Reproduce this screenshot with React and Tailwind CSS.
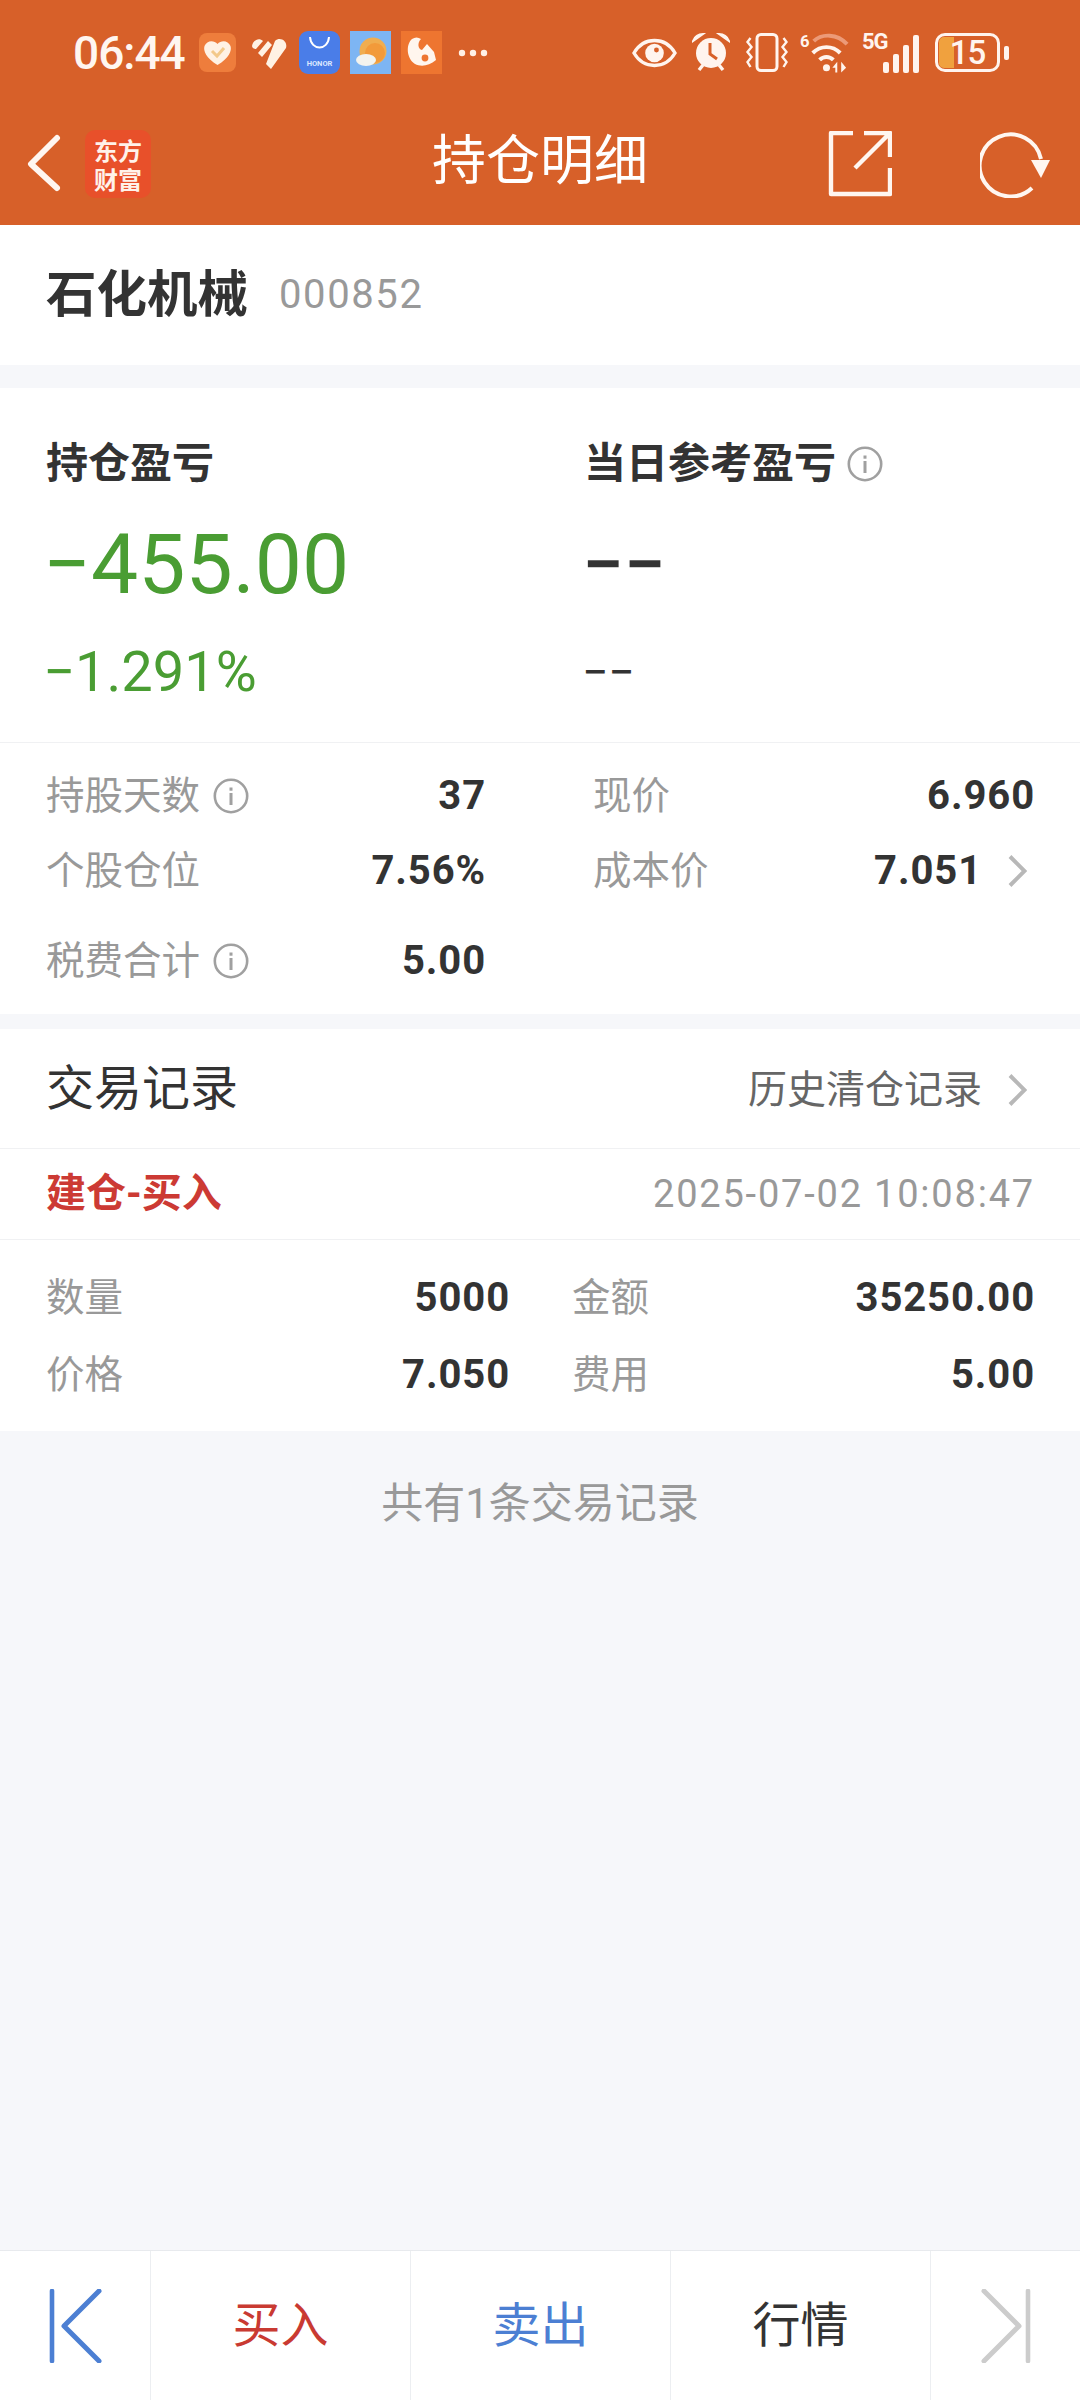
const sans = { fontFamily: '"Roboto","Noto Sans CJK SC",sans-serif' };

function Info({ className = "" }) {
  return (
    <svg width="36" height="36" viewBox="0 0 36 36" className={className}>
      <circle cx="18" cy="18" r="16.2" fill="none" stroke="#a0a0a0" strokeWidth="2.6" />
      <rect x="16.5" y="15" width="3" height="12" fill="#a0a0a0" />
      <rect x="16.5" y="9.5" width="3" height="3.2" fill="#a0a0a0" />
    </svg>
  );
}

function Chevron({ className = "" }) {
  return (
    <svg width="19" height="32" viewBox="0 0 19 32" className={"ml-[26px] " + className}>
      <path d="M2 1.5 L16.5 16 L2 30.5" fill="none" stroke="#b8b8b8" strokeWidth="4" />
    </svg>
  );
}

function StatusLeft() {
  return (
    <div className="flex items-center">
      <span className="text-[46px] font-medium text-[#fff6f0] tracking-[-1px] w-[111px] leading-none">06:44</span>
      <svg width="37" height="39" viewBox="0 0 37 39" className="ml-[15px]">
        <rect width="37" height="39" rx="8" fill="#ee7d3c" />
        <path d="M18.5 32 C7 25 4 18 5.5 13 C8 7 15 7 18.5 11 C22 7 29 7 31.5 13 C33 18 30 25 18.5 32Z" fill="#fff2e4" />
        <path d="M13 18 L18 23 L25 15" fill="none" stroke="#f3c98a" strokeWidth="3" />
      </svg>
      <svg width="36" height="32" viewBox="0 0 36 32" className="ml-[15px]">
        <path d="M1 9 C2 3 8 0 12 4 L5 12 C3 12 1 11 1 9Z M7 16 L17 4 L21 8 L11 20Z M15 27 L24 4 C29 -1 37 4 35 11 L20 32Z" fill="#fff2e4" />
      </svg>
      <svg width="41" height="43" viewBox="0 0 41 43" className="ml-[12px]">
        <rect width="41" height="43" rx="9" fill="#4a7de8" />
        <path d="M11 6 C12 20 29 20 30 6" fill="none" stroke="#fff" strokeWidth="2" />
        <text x="20.5" y="35" textAnchor="middle" fontSize="7.5" fontWeight="700" fill="#dce8ff" fontFamily="Roboto">HONOR</text>
      </svg>
      <svg width="41" height="43" viewBox="0 0 41 43" className="ml-[10px]">
        <rect width="41" height="43" fill="#7db5f3" />
        <circle cx="23" cy="20" r="13.5" fill="#f0ad4f" />
        <circle cx="25" cy="22" r="10" fill="#f29a3a" />
        <ellipse cx="16" cy="29" rx="10" ry="6" fill="#f3f3ee" />
      </svg>
      <svg width="41" height="43" viewBox="0 0 41 43" className="ml-[10px]">
        <rect width="41" height="43" fill="#ee7530" />
        <path d="M11 8 C5 13 5 27 14 33 C20 36 28 35 35 29 L33 21 L26 13 L21 19 C17 18 16 12 20 8 C17 6 14 6 11 8Z" fill="#fff6ee" />
        <circle cx="24" cy="27" r="3.4" fill="#ee7530" />
      </svg>
      <svg width="30" height="8" viewBox="0 0 30 8" className="ml-[16px]">
        <circle cx="4" cy="4" r="3.2" fill="#fff0e6" />
        <circle cx="15" cy="4" r="3.2" fill="#fff0e6" />
        <circle cx="26" cy="4" r="3.2" fill="#fff0e6" />
      </svg>
    </div>
  );
}

function StatusRight() {
  const c = "#fff4ee";
  return (
    <div className="flex items-center">
      <svg width="45" height="32" viewBox="0 0 46 32">
        <path d="M2 16 C12 -1 34 -1 44 16 C34 33 12 33 2 16Z" fill="none" stroke={c} strokeWidth="3.4" />
        <circle cx="23" cy="16" r="9.5" fill={c} />
        <circle cx="25" cy="13" r="2.5" fill="#d76029" />
      </svg>
      <svg width="38" height="39" viewBox="0 0 38 39" className="ml-[15px]">
        <circle cx="19" cy="20" r="15" fill={c} />
        <path d="M18 10 V21 L25 26" fill="none" stroke="#d76029" strokeWidth="3" />
        <path d="M1 8 C3 3 7 1 11 1 Z M37 8 C35 3 31 1 27 1Z" fill={c} stroke={c} strokeWidth="2" />
        <path d="M7 37 L11 32 M31 37 L27 32" stroke={c} strokeWidth="3.4" />
      </svg>
      <svg width="43" height="39" viewBox="0 0 42 39" className="ml-[15px]">
        <rect x="11.5" y="1.5" width="20" height="36" rx="4" fill="none" stroke={c} strokeWidth="3" />
        <path d="M5 5 L2 9 L6 14 L2 19 L6 24 L2 29 L5 34 M38 5 L41 9 L37 14 L41 19 L37 24 L41 29 L38 34" fill="none" stroke={c} strokeWidth="2.4" />
      </svg>
      <svg width="51" height="42" viewBox="0 0 52 42" className="ml-[12px]">
        <text x="0" y="15" fontSize="17" fontWeight="700" fill={c} fontFamily="Roboto">6</text>
        <path d="M14 9 C22 1 38 1 48 12" fill="none" stroke="#ec9a78" strokeWidth="4" />
        <path d="M13 21 C21 13 33 13 41 21" fill="none" stroke={c} strokeWidth="4" />
        <path d="M20 28 C24 24 30 24 34 28" fill="none" stroke={c} strokeWidth="4" />
        <circle cx="27" cy="36" r="3.6" fill={c} />
        <path d="M33 36 L38 30 V41 H36 V36 Z M42 30 L47 36 L42 41 Z" fill={c} />
      </svg>
      <div className="ml-[11px] relative w-[57px] h-[40px]">
        <span className="absolute left-0 top-[-2px] text-[22px] font-bold leading-[22px] tracking-[-1px] text-[#fff4ee]">5G</span>
        <div className="absolute right-0 bottom-0 flex items-end gap-[4px]">
          <span className="w-[6px] h-[11px] bg-[#fff4ee] rounded-[2px]" />
          <span className="w-[6px] h-[19px] bg-[#fff4ee] rounded-[2px]" />
          <span className="w-[6px] h-[28px] bg-[#fff4ee] rounded-[2px]" />
          <span className="w-[6px] h-[38px] bg-[#fff4ee] rounded-[2px]" />
        </div>
      </div>
      <div className="ml-[16px] relative w-[65px] h-[39px] rounded-[10px] border-[3px] border-[#fff4ee] overflow-hidden flex items-center justify-center">
        <span className="absolute left-[1px] top-[1px] bottom-[1px] w-[15px] rounded-l-[5px] bg-[#f0a13e]" />
        <span className="relative text-[33px] leading-none font-medium tracking-[-1px] text-[#fff4ee]">15</span>
      </div>
      <span className="ml-[4px] w-[5px] h-[14px] rounded-[2px] bg-[#fff4ee]" />
    </div>
  );
}

function Metric({ label, info, value, chevron, className = "" }) {
  return (
    <div className={"flex items-center h-[40px] " + className}>
      <span className="text-[38.5px] text-[#999999] leading-none">{label}</span>
      {info && <Info className="ml-[13px]" />}
      <span className="ml-auto text-[40px] font-bold text-[#333333] leading-none tracking-[0.9px]">{value}</span>
      {chevron && <Chevron className="mr-[8px]" />}
    </div>
  );
}

function Tab({ label, color }) {
  return (
    <div className="w-[260px] h-full flex items-center justify-center border-l border-[#eceef1] text-[48px]" style={{ color }}>
      {label}
    </div>
  );
}

export default function App() {
  return (
    <div className="w-[1080px] h-[2400px] bg-[#f6f7fa] flex flex-col overflow-hidden" style={sans}>
      <header className="h-[225px] bg-[#d76029] shrink-0 flex flex-col">
        <div className="h-[102px] pl-[73px] pr-[71px] flex items-center justify-between pt-[3px]">
          <StatusLeft />
          <StatusRight />
        </div>
        <div className="flex-1 relative flex items-center">
          <svg width="36" height="60" viewBox="0 0 36 60" className="ml-[26px]">
            <path d="M31 4 L5 30 L31 54" fill="none" stroke="#fff6f0" strokeWidth="6" strokeLinecap="round" strokeLinejoin="round" />
          </svg>
          <div className="ml-[23px] w-[66px] h-[68px] bg-[#e8502a] rounded-[10px] flex items-center justify-center">
            <span className="w-[48px] text-center text-[#fff2ea] text-[24px] leading-[29px] font-bold" style={{ fontFamily: '"Noto Sans CJK SC",serif' }}>东方财富</span>
          </div>
          <span className="absolute left-0 right-0 text-center text-[54px] text-white leading-none pointer-events-none top-[33px]">持仓明细</span>
          <svg width="64" height="66" viewBox="0 0 64 66" className="ml-auto">
            <path d="M25 2 H3 V63 H62 V37 M62 26 V2 H36 M61 3 L27 37" fill="none" stroke="#fff6f0" strokeWidth="4.4" strokeLinejoin="round" />
          </svg>
          <svg width="72" height="68" viewBox="0 0 72 68" className="ml-[88px] mr-[28px]">
            <path d="M52 58 A31 31 0 1 1 61 29" fill="none" stroke="#fff6f0" strokeWidth="4" />
            <path d="M51 30 L70 30 L61 48 Z" fill="#fff6f0" />
          </svg>
        </div>
      </header>

      <section className="h-[140px] bg-white shrink-0 flex items-center pl-[46px]">
        <span className="text-[50.5px] font-bold text-[#333333] leading-none">石化机械</span>
        <span className="ml-[31px] text-[40px] text-[#999999] leading-none tracking-[1.6px]">000852</span>
      </section>

      <section className="mt-[23px] bg-white shrink-0 h-[626px] flex flex-col">
        <div className="h-[355px] shrink-0 border-b border-[#f0f1f3] grid grid-cols-[538px_1fr] pl-[46px] pt-[55px]">
          <div className="flex flex-col">
            <span className="text-[42px] font-bold text-[#333333] leading-none">持仓盈亏</span>
            <span className="mt-[38px] ml-[-3px] text-[84px] text-[#4a9d33] leading-none">−455.00</span>
            <span className="mt-[37px] ml-[-3px] text-[56px] text-[#4a9d33] leading-none">−1.291%</span>
          </div>
          <div className="flex flex-col">
            <div className="flex items-center h-[42px]">
              <span className="text-[42px] font-bold text-[#333333] leading-none">当日参考盈亏</span>
              <Info className="ml-[11px]" />
            </div>
            <span className="mt-[38px] ml-[-2px] text-[74px] font-medium text-[#333333] leading-[84px]">−−</span>
            <span className="mt-[37px] ml-[-2px] text-[46px] text-[#333333] leading-[56px]">−−</span>
          </div>
        </div>
        <div className="grid grid-cols-[440px_442px] gap-x-[107px] pl-[46px] pt-[33px]">
          <div className="flex flex-col">
            <Metric label="持股天数" info value="37" />
            <Metric label="个股仓位" value="7.56%" className="mt-[35px]" />
            <Metric label="税费合计" info value="5.00" className="mt-[50px]" />
          </div>
          <div className="flex flex-col">
            <Metric label="现价" value="6.960" />
            <Metric label="成本价" value="7.051" chevron className="mt-[35px]" />
          </div>
        </div>
      </section>

      <section className="mt-[15px] bg-white shrink-0 h-[402px] flex flex-col">
        <div className="h-[120px] shrink-0 border-b border-[#f0f1f3] flex items-center pl-[46px] pr-[53px]">
          <span className="text-[48px] text-[#333333] leading-none">交易记录</span>
          <span className="ml-auto mt-[3px] text-[39px] text-[#666666] leading-none">历史清仓记录</span>
          <Chevron className="mt-[3px]" />
        </div>
        <div className="h-[91px] shrink-0 border-b border-[#f0f1f3] flex items-center pl-[46px] pr-[45px]">
          <span className="text-[40px] font-bold text-[#cc3a34] leading-none">建仓-买入</span>
          <span className="ml-auto text-[38px] text-[#999999] leading-none tracking-[1.8px]">2025-07-02 10:08:47</span>
        </div>
        <div className="grid grid-cols-[464px_1fr] gap-x-[62px] pl-[46px] pr-[45px] pt-[38px] gap-y-[37px]">
          <Metric label="数量" value="5000" />
          <Metric label="金额" value="35250.00" />
          <Metric label="价格" value="7.050" />
          <Metric label="费用" value="5.00" />
        </div>
      </section>

      <p className="mt-[52px] text-center text-[42px] text-[#999999] leading-none">共有1条交易记录</p>

      <nav className="mt-auto h-[150px] bg-white border-t border-[#e8eaee] shrink-0 flex items-center">
        <div className="w-[150px] h-full flex items-center pl-[49px]">
          <svg width="54" height="74" viewBox="0 0 54 74">
            <path d="M3 2 V72" fill="none" stroke="#4c7fd3" strokeWidth="4.6" strokeLinecap="round" />
            <path d="M50 2 L15 37 L50 72" fill="none" stroke="#4c7fd3" strokeWidth="5" strokeLinecap="round" strokeLinejoin="round" />
          </svg>
        </div>
        <Tab label="买入" color="#c93a32" />
        <Tab label="卖出" color="#4c7fd3" />
        <Tab label="行情" color="#333333" />
        <div className="flex-1 h-full border-l border-[#eceef1] flex items-center pl-[50px]">
          <svg width="54" height="74" viewBox="0 0 54 74">
            <path d="M3 2 L38 37 L3 72" fill="none" stroke="#cccccc" strokeWidth="5" strokeLinecap="round" strokeLinejoin="round" />
            <path d="M47 2 V72" fill="none" stroke="#cccccc" strokeWidth="4.6" strokeLinecap="round" />
          </svg>
        </div>
      </nav>
    </div>
  );
}
